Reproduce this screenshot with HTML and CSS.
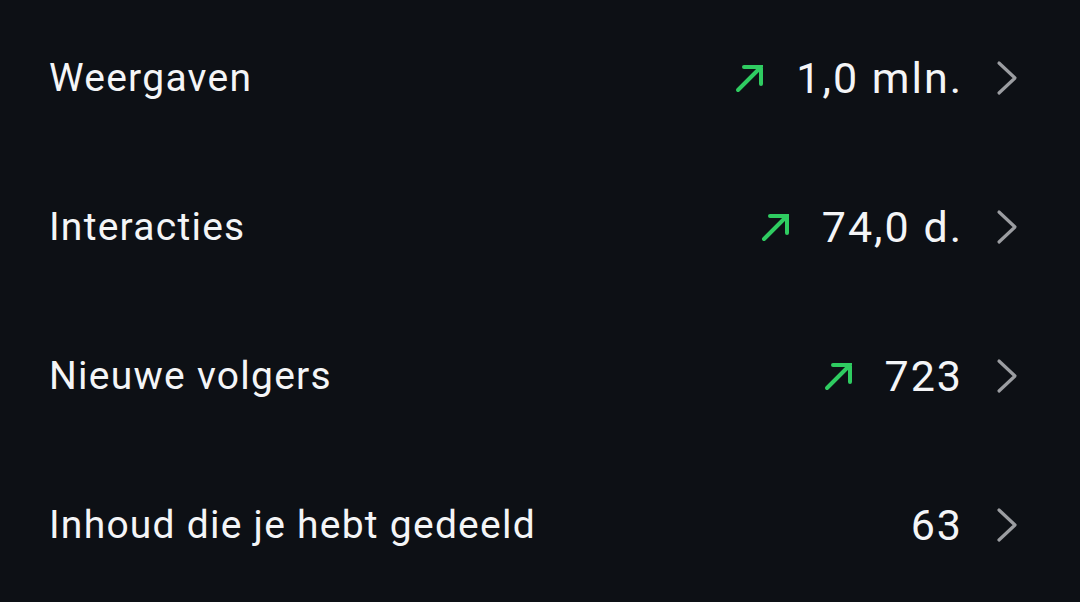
FILE: index.html
```html
<!DOCTYPE html>
<html>
<head>
<meta charset="utf-8">
<link rel="stylesheet" href="styles.css">
</head>
<body>
<div class="list">
  <div class="row">
    <span class="label">Weergaven</span>
    <span class="right">
      <svg class="trend" viewBox="0 0 32 32"><path d="M4 28 L27 5 M10 5 H27 V22" fill="none" stroke="#2fcc61" stroke-width="4" stroke-linecap="round" stroke-linejoin="miter"/></svg>
      <span class="value">1,0 mln.</span>
      <svg class="chev" viewBox="0 0 22 36"><path d="M3 3 L19 18 L3 33" fill="none" stroke="#9b9da1" stroke-width="3.2" stroke-linecap="round" stroke-linejoin="round"/></svg>
    </span>
  </div>
  <div class="row">
    <span class="label">Interacties</span>
    <span class="right">
      <svg class="trend" viewBox="0 0 32 32"><path d="M4 28 L27 5 M10 5 H27 V22" fill="none" stroke="#2fcc61" stroke-width="4" stroke-linecap="round" stroke-linejoin="miter"/></svg>
      <span class="value">74,0 d.</span>
      <svg class="chev" viewBox="0 0 22 36"><path d="M3 3 L19 18 L3 33" fill="none" stroke="#9b9da1" stroke-width="3.2" stroke-linecap="round" stroke-linejoin="round"/></svg>
    </span>
  </div>
  <div class="row">
    <span class="label">Nieuwe volgers</span>
    <span class="right">
      <svg class="trend" viewBox="0 0 32 32"><path d="M4 28 L27 5 M10 5 H27 V22" fill="none" stroke="#2fcc61" stroke-width="4" stroke-linecap="round" stroke-linejoin="miter"/></svg>
      <span class="value">723</span>
      <svg class="chev" viewBox="0 0 22 36"><path d="M3 3 L19 18 L3 33" fill="none" stroke="#9b9da1" stroke-width="3.2" stroke-linecap="round" stroke-linejoin="round"/></svg>
    </span>
  </div>
  <div class="row">
    <span class="label">Inhoud die je hebt gedeeld</span>
    <span class="right">
      <span class="value">63</span>
      <svg class="chev" viewBox="0 0 22 36"><path d="M3 3 L19 18 L3 33" fill="none" stroke="#9b9da1" stroke-width="3.2" stroke-linecap="round" stroke-linejoin="round"/></svg>
    </span>
  </div>
</div>
</body>
</html>
```

FILE: styles.css
```css
html, body {
  margin: 0;
  padding: 0;
  background: #0d1015;
  width: 1080px;
  height: 602px;
  overflow: hidden;
}
body {
  font-family: Roboto, "Noto Sans", sans-serif;
  color: #f4f5f7;
}
.list {
  display: flex;
  flex-direction: column;
  padding-top: 3px;
}
.row {
  height: 149px;
  display: flex;
  align-items: center;
  justify-content: space-between;
  padding: 0 62px 0 49px;
}
.label {
  font-size: 39px;
  letter-spacing: 1.25px;
}
.right {
  display: flex;
  align-items: center;
}
.trend {
  width: 32px;
  height: 32px;
  margin-right: 30px;
}
.value {
  font-size: 43px;
  letter-spacing: 2px;
  margin-right: 33px;
}
.chev {
  width: 22px;
  height: 36px;
}
```
